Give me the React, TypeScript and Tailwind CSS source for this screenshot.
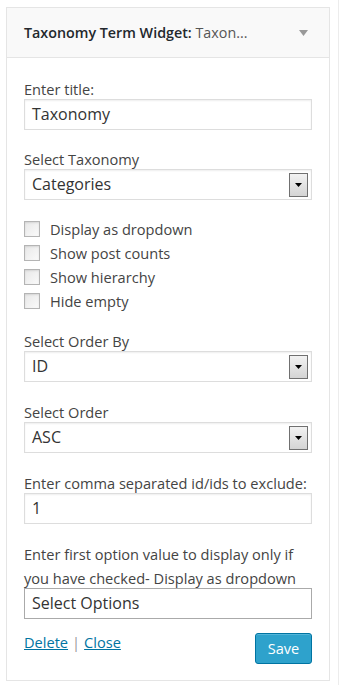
import React from 'react';

const font = { fontFamily: '"Open Sans", "Noto Sans", sans-serif' };

const Label = ({ children }: { children: React.ReactNode }) => (
  <div className="text-[14.6px] leading-[20px] text-[#444]">{children}</div>
);

const TextInput = ({ value, dark }: { value: string; dark?: boolean }) => (
  <div
    className={`h-[31px] w-full border bg-white px-[7px] text-[16px] leading-[29px] text-[#333] ${
      dark ? 'border-[#aaa]' : 'border-[#ddd] shadow-[inset_0_1px_2px_rgba(0,0,0,0.07)]'
    }`}
  >
    {value}
  </div>
);

const SelectBox = ({ value }: { value: string }) => (
  <div className="flex h-[31px] w-full items-center justify-between border border-[#ddd] bg-white pl-[7px] pr-[3px] shadow-[inset_0_1px_2px_rgba(0,0,0,0.07)]">
    <span className="text-[16px] leading-[29px] text-[#333]">{value}</span>
    <span className="flex h-[24px] w-[19px] items-center justify-center border border-[#707070] bg-gradient-to-b from-[#f2f2f2] to-[#d4d4d4]">
      <svg width="7" height="4" viewBox="0 0 7 4">
        <path d="M0 0h7L3.5 4z" fill="#000" />
      </svg>
    </span>
  </div>
);

const Check = ({ label }: { label: string }) => (
  <label className="flex h-[24px] items-center gap-[10px]">
    <span className="h-[16px] w-[16px] shrink-0 border border-[#b4b4b4] bg-gradient-to-br from-[#e8e8e8] to-[#fafafa] shadow-[inset_0_1px_2px_rgba(0,0,0,0.1)]" />
    <span className="text-[14.6px] leading-[20px] text-[#444]">{label}</span>
  </label>
);

export default function App() {
  return (
    <div className="h-[685px] w-[339px] border-r border-[#ececec] bg-white pt-[7px] pl-[6px]" style={font}>
      <div className="w-[324px] border border-[#e5e5e5] bg-white">
        {/* header */}
        <div className="flex h-[50px] items-center justify-between border-b border-[#e5e5e5] bg-[#f9f9f9] pl-[17px] pr-[21px]">
          <h3 className="text-[14.3px] font-semibold text-[#23282d]">
            Taxonomy Term Widget: <span className="font-normal text-[#555]">Taxon...</span>
          </h3>
          <svg width="9" height="6" viewBox="0 0 9 6" className="mt-[1px]">
            <path d="M0 0h9L4.5 6z" fill="#999" />
          </svg>
        </div>

        {/* form */}
        <div className="px-[17px] pt-[21px] pb-[16px]">
          <Label>Enter title:</Label>
          <TextInput value="Taxonomy" />

          <div className="mt-[19px]">
            <Label>Select Taxonomy</Label>
            <SelectBox value="Categories" />
          </div>

          <div className="mt-[17px] flex flex-col">
            <Check label="Display as dropdown" />
            <Check label="Show post counts" />
            <Check label="Show hierarchy" />
            <Check label="Hide empty" />
          </div>

          <div className="mt-[18px]">
            <Label>Select Order By</Label>
            <SelectBox value="ID" />
          </div>

          <div className="mt-[20px]">
            <Label>Select Order</Label>
            <SelectBox value="ASC" />
          </div>

          <div className="mt-[20px]">
            <Label>Enter comma separated id/ids to exclude:</Label>
            <TextInput value="1" />
          </div>

          <div className="mt-[18px]">
            <div className="text-[14.6px] leading-[24px] text-[#444]">
              Enter first option value to display only if you have checked- Display as dropdown
            </div>
            <div className="-mt-[2px]">
              <TextInput value="Select Options" dark />
            </div>
          </div>

          <div className="mt-[14px] flex items-start justify-between">
            <div className="-mt-[1px] text-[14.6px] leading-[20px] text-[#444]">
              <a href="#" className="text-[#0074a2] underline">Delete</a>
              <span className="mx-[4px] text-[#999]">|</span>
              <a href="#" className="text-[#0074a2] underline">Close</a>
            </div>
            <button className="h-[31px] w-[57px] rounded-[3px] border border-[#0074a2] bg-[#2ea2cc] text-[14.6px] text-white shadow-[inset_0_1px_0_rgba(120,200,230,0.5)]">
              Save
            </button>
          </div>
        </div>
      </div>
    </div>
  );
}
